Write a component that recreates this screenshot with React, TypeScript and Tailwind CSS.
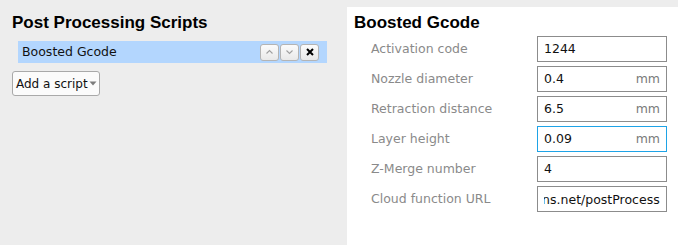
import { useEffect, useRef } from "react";
import type { ReactNode } from "react";

const fields: { label: string; value: string; unit?: string; focused?: boolean; scrolled?: boolean }[] = [
  { label: "Activation code", value: "1244" },
  { label: "Nozzle diameter", value: "0.4", unit: "mm" },
  { label: "Retraction distance", value: "6.5", unit: "mm" },
  { label: "Layer height", value: "0.09", unit: "mm", focused: true },
  { label: "Z-Merge number", value: "4" },
  { label: "Cloud function URL", value: "https://us-central1-boosted.cloudfunctions.net/postProcess", scrolled: true },
];

function SmallButton({ children }: { children: ReactNode }) {
  return (
    <div className="flex h-[17px] w-[19px] items-center justify-center rounded-[3px] border border-[#b4b4b4] bg-gradient-to-b from-[#fbfbfb] to-[#e9e9e9]">
      {children}
    </div>
  );
}

function Chevron({ up }: { up?: boolean }) {
  return (
    <svg width="9" height="6" viewBox="0 0 9 6" fill="none">
      <path
        d={up ? "M1.5 4.5 L4.5 1.5 L7.5 4.5" : "M1.5 1.5 L4.5 4.5 L7.5 1.5"}
        stroke="#a0a0a0"
        strokeWidth="1.1"
      />
    </svg>
  );
}

function ScrolledInput({ value }: { value: string }) {
  const ref = useRef<HTMLInputElement>(null);
  useEffect(() => {
    if (ref.current) ref.current.scrollLeft = ref.current.scrollWidth;
  }, []);
  return (
    <input
      ref={ref}
      readOnly
      value={value}
      className="h-full w-full bg-transparent text-[12.5px] text-[#111] outline-none"
      style={{ fontFamily: '"DejaVu Sans", sans-serif' }}
    />
  );
}

function FieldRow({ field }: { field: (typeof fields)[number] }) {
  return (
    <div className="flex h-[26px] items-center">
      <div className="w-[166px] text-[12.5px] text-[#8a8a8a]">{field.label}</div>
      <div
        className={
          field.focused
            ? "flex h-[26px] w-[130px] items-center overflow-hidden border border-[#1ea3e6] bg-white pl-[6px] pr-[6px]"
            : "flex h-[26px] w-[130px] items-center overflow-hidden border border-[#8c8c8c] bg-white pl-[6px] pr-[6px]"
        }
      >
        {field.scrolled ? (
          <ScrolledInput value={field.value} />
        ) : (
          <>
            <span className="flex-1 text-[12.5px] text-[#111]">{field.value}</span>
            {field.unit && <span className="text-[12.5px] text-[#7a7a7a]">{field.unit}</span>}
          </>
        )}
      </div>
    </div>
  );
}

export default function App() {
  return (
    <div
      className="flex h-[245px] w-[678px] overflow-hidden bg-[#ededed]"
      style={{ fontFamily: '"DejaVu Sans", sans-serif' }}
    >
      {/* Scripts list */}
      <div className="w-[347px] shrink-0 pl-[12px] pt-[13px]">
        <h2 className="h-[20px] text-[17px] font-bold leading-[20px] text-black" style={{ fontFamily: '"Liberation Sans", sans-serif' }}>
          Post Processing Scripts
        </h2>
        <div className="ml-[6px] mt-[8px] flex h-[22px] w-[309px] items-center bg-[#b3d6fe] pl-[4px] pr-[8px]">
          <span className="flex-1 text-[12.5px] text-[#111]">Boosted Gcode</span>
          <div className="flex gap-[1px]">
            <SmallButton>
              <Chevron up />
            </SmallButton>
            <SmallButton>
              <Chevron />
            </SmallButton>
            <SmallButton>
              <svg width="8" height="8" viewBox="0 0 8 8">
                <path d="M1 1 L7 7 M7 1 L1 7" stroke="#000" strokeWidth="2" />
              </svg>
            </SmallButton>
          </div>
        </div>
        <button className="mt-[8px] flex h-[25px] w-[88px] items-center rounded-[3px] border border-[#a9a9a9] bg-[#fbfbfb] pl-[3px] text-[12px] text-[#111]">
          Add a script
          <svg width="8" height="5" viewBox="0 0 8 5" className="ml-[1px]">
            <path d="M0.5 0.5 L7.5 0.5 L4 4.5 Z" fill="#7c7c7c" />
          </svg>
        </button>
      </div>

      {/* Script settings */}
      <div className="mt-[7px] flex-1 bg-white pl-[7px] pt-[6px]">
        <h2 className="h-[20px] text-[17px] font-bold leading-[20px] text-black" style={{ fontFamily: '"Liberation Sans", sans-serif' }}>
          Boosted Gcode
        </h2>
        <div className="mt-[3px] flex flex-col gap-[4px] pl-[17px]">
          {fields.map((f) => (
            <FieldRow key={f.label} field={f} />
          ))}
        </div>
      </div>
    </div>
  );
}
